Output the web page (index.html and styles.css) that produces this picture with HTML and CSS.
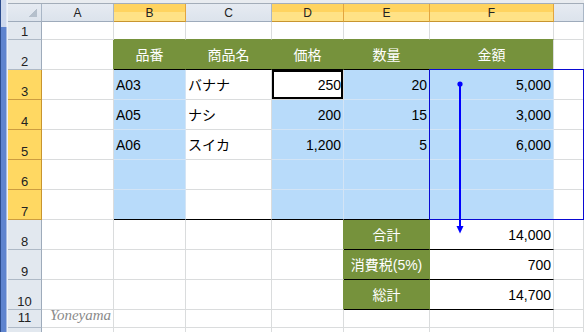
FILE: index.html
```html
<!DOCTYPE html>
<html lang="ja">
<head>
<meta charset="utf-8">
<title>売上集計</title>
<link rel="stylesheet" href="styles.css">
</head>
<body>
<div class="frame"><div class="frame-top"></div></div>
<div class="sheet">
  <div class="topband"></div>
  <div class="grid">
    <!-- column headers -->
    <div class="corner"><span class="tri"></span></div>
    <div class="hd">A</div>
    <div class="hd on">B</div>
    <div class="hd">C</div>
    <div class="hd on">D</div>
    <div class="hd on">E</div>
    <div class="hd on">F</div>
    <div class="hd"></div>

    <!-- row 1 -->
    <div class="rh">1</div>
    <div class="c"></div>
    <div class="c gb"></div>
    <div class="c gb"></div>
    <div class="c gb"></div>
    <div class="c gb"></div>
    <div class="c gb"></div>
    <div class="c"></div>

    <!-- row 2: table head -->
    <div class="rh">2</div>
    <div class="c gr"></div>
    <div class="c head">品番</div>
    <div class="c head">商品名</div>
    <div class="c head">価格</div>
    <div class="c head">数量</div>
    <div class="c head last">金額</div>
    <div class="c"></div>

    <!-- row 3 -->
    <div class="rh on">3</div>
    <div class="c"></div>
    <div class="c sel">A03</div>
    <div class="c">バナナ</div>
    <div class="c num active">250</div>
    <div class="c sel num">20</div>
    <div class="c sel num">5,000</div>
    <div class="c"></div>

    <!-- row 4 -->
    <div class="rh on">4</div>
    <div class="c"></div>
    <div class="c sel">A05</div>
    <div class="c">ナシ</div>
    <div class="c sel num">200</div>
    <div class="c sel num">15</div>
    <div class="c sel num">3,000</div>
    <div class="c"></div>

    <!-- row 5 -->
    <div class="rh on">5</div>
    <div class="c"></div>
    <div class="c sel">A06</div>
    <div class="c">スイカ</div>
    <div class="c sel num">1,200</div>
    <div class="c sel num">5</div>
    <div class="c sel num">6,000</div>
    <div class="c"></div>

    <!-- row 6 -->
    <div class="rh on">6</div>
    <div class="c"></div>
    <div class="c sel"></div>
    <div class="c"></div>
    <div class="c sel"></div>
    <div class="c sel"></div>
    <div class="c sel"></div>
    <div class="c"></div>

    <!-- row 7 -->
    <div class="rh on">7</div>
    <div class="c"></div>
    <div class="c sel bt"></div>
    <div class="c bt"></div>
    <div class="c sel bt"></div>
    <div class="c sel bt"></div>
    <div class="c sel bt"></div>
    <div class="c"></div>

    <!-- row 8 -->
    <div class="rh">8</div>
    <div class="c"></div>
    <div class="c"></div>
    <div class="c"></div>
    <div class="c gr"></div>
    <div class="c lbl">合計</div>
    <div class="c num tot">14,000</div>
    <div class="c"></div>

    <!-- row 9 -->
    <div class="rh">9</div>
    <div class="c"></div>
    <div class="c"></div>
    <div class="c"></div>
    <div class="c gr"></div>
    <div class="c lbl">消費税(5%)</div>
    <div class="c num tot">700</div>
    <div class="c"></div>

    <!-- row 10 -->
    <div class="rh">10</div>
    <div class="c"></div>
    <div class="c"></div>
    <div class="c"></div>
    <div class="c gr"></div>
    <div class="c lbl">総計</div>
    <div class="c num tot">14,700</div>
    <div class="c"></div>

    <!-- row 11 -->
    <div class="rh short">11</div>
    <div class="c short mark">Yoneyama</div>
    <div class="c short"></div>
    <div class="c short"></div>
    <div class="c short"></div>
    <div class="c short"></div>
    <div class="c short"></div>
    <div class="c short"></div>

    <!-- row 12 (only its top edge is in view) -->
    <div class="rh short"></div>
    <div class="c short"></div>
    <div class="c short"></div>
    <div class="c short"></div>
    <div class="c short"></div>
    <div class="c short"></div>
    <div class="c short"></div>
    <div class="c short"></div>

    <!-- precedent range box and dependent arrow -->
    <div class="trace-box"></div>
    <svg class="trace-arrow" viewBox="0 0 124 180" width="124" height="180" aria-hidden="true">
      <circle cx="30" cy="14" r="2.6" fill="#0000ff"/>
      <line x1="30" y1="14" x2="30" y2="157" stroke="#0000ff" stroke-width="2"/>
      <polygon points="26.5,156 33.5,156 30,163.5" fill="#0000ff"/>
    </svg>
  </div>
</div>
</body>
</html>
```

FILE: styles.css
```css
* { box-sizing: border-box; }

html, body {
  margin: 0;
  padding: 0;
}

body {
  width: 584px;
  height: 332px;
  overflow: hidden;
  background: #ffffff;
  display: flex;
  font-family: "Liberation Sans", "Noto Sans CJK JP", sans-serif;
}

/* window frame on the left edge */
.frame {
  width: 8px;
  flex: none;
  background: linear-gradient(to right, #2b4c8e 0 1px, #5f84cf 1px 6px, #a9bce2 6px 7px, #eef2f8 7px 8px);
}

.frame-top {
  height: 27px;
  background: linear-gradient(to right, #2b4c8e 0 1px, #cdd8ed 1px 6px, #e3e9f4 6px 7px, #eef2f8 7px 8px);
}

.sheet {
  flex: 1;
  min-width: 0;
  display: flex;
  flex-direction: column;
}

.topband {
  height: 4px;
  flex: none;
  background: #e9ecf0;
  border-bottom: 1px solid #a3adb9;
}

.grid {
  position: relative;
  display: grid;
  grid-template-columns: 34px 72px 72px 86px 72px 86px 124px 1fr;
  grid-template-rows: 18px 18px repeat(9, 30px) 18px 18px;
}

/* headers */
.corner {
  background: linear-gradient(#e6ebf2, #dce3ec);
  border-right: 1px solid #a9b6c6;
  border-bottom: 1px solid #9eabbb;
  display: flex;
  justify-content: flex-end;
  align-items: flex-end;
  padding: 0 4px 4px 0;
}

.tri {
  width: 9px;
  height: 8px;
  background: linear-gradient(to bottom right, transparent 50%, #b5c0cc 50%);
}

.hd {
  background: linear-gradient(#e6ebf2, #dce3ec);
  border-right: 1px solid #a9b6c6;
  border-bottom: 1px solid #9eabbb;
  display: flex;
  align-items: center;
  justify-content: center;
  font-size: 12px;
  color: #222;
}

.hd.on {
  background: linear-gradient(#ffd35f 0 50%, #ffe286 50% 100%);
  border-right-color: #e2a53f;
  border-bottom-color: #c8952f;
}

.rh {
  background: #e2e8ef;
  border-right: 1px solid #9eabbb;
  border-bottom: 1px solid #aeb9c6;
  display: flex;
  align-items: flex-end;
  justify-content: center;
  font-size: 13px;
  line-height: 14px;
  color: #222;
}

.rh.on {
  background: #ffd862;
  border-right-color: #c8952f;
  border-bottom-color: #cc9c3f;
}

/* cells */
.c {
  border-right: 1px solid #dadcdd;
  border-bottom: 1px solid #dadcdd;
  display: flex;
  align-items: flex-end;
  padding: 0 2px 6px;
  font-size: 14px;
  line-height: 16px;
  color: #000;
  white-space: nowrap;
}

.num { justify-content: flex-end; }

.sel {
  background: #b8dbfa;
  border-color: #d3e4f5;
}

.gb { border-bottom-color: #76923c; }
.gr { border-right-color: #76923c; }

.head {
  background: #76923c;
  color: #ffffff;
  justify-content: center;
  border-right-color: #76923c;
  border-bottom-color: #000;
}

.head.last { border-right-color: #dadcdd; }

.bt { border-bottom-color: #000; }

.lbl {
  background: #76923c;
  color: #ffffff;
  justify-content: center;
  border-right-color: #76923c;
  border-bottom-color: #000;
}

.tot { border-bottom-color: #000; }

.active {
  background: #ffffff;
  box-shadow: inset 0 0 0 2px #000;
}

.short { padding-bottom: 2px; }

.mark {
  font-family: "Liberation Serif", serif;
  font-style: italic;
  font-size: 15px;
  color: #8a8a8a;
  padding-left: 8px;
  padding-bottom: 4px;
  overflow: visible;
}

/* trace precedents / dependents */
.trace-box {
  position: absolute;
  grid-column: 7;
  grid-row: 4 / 9;
  top: -1px;
  left: -1px;
  right: 0;
  bottom: 0;
  border: 1px solid #0a0ad2;
  pointer-events: none;
}

.trace-arrow {
  position: absolute;
  grid-column: 7;
  grid-row: 4 / 10;
  top: 0;
  left: 0;
  overflow: visible;
  pointer-events: none;
}
```
